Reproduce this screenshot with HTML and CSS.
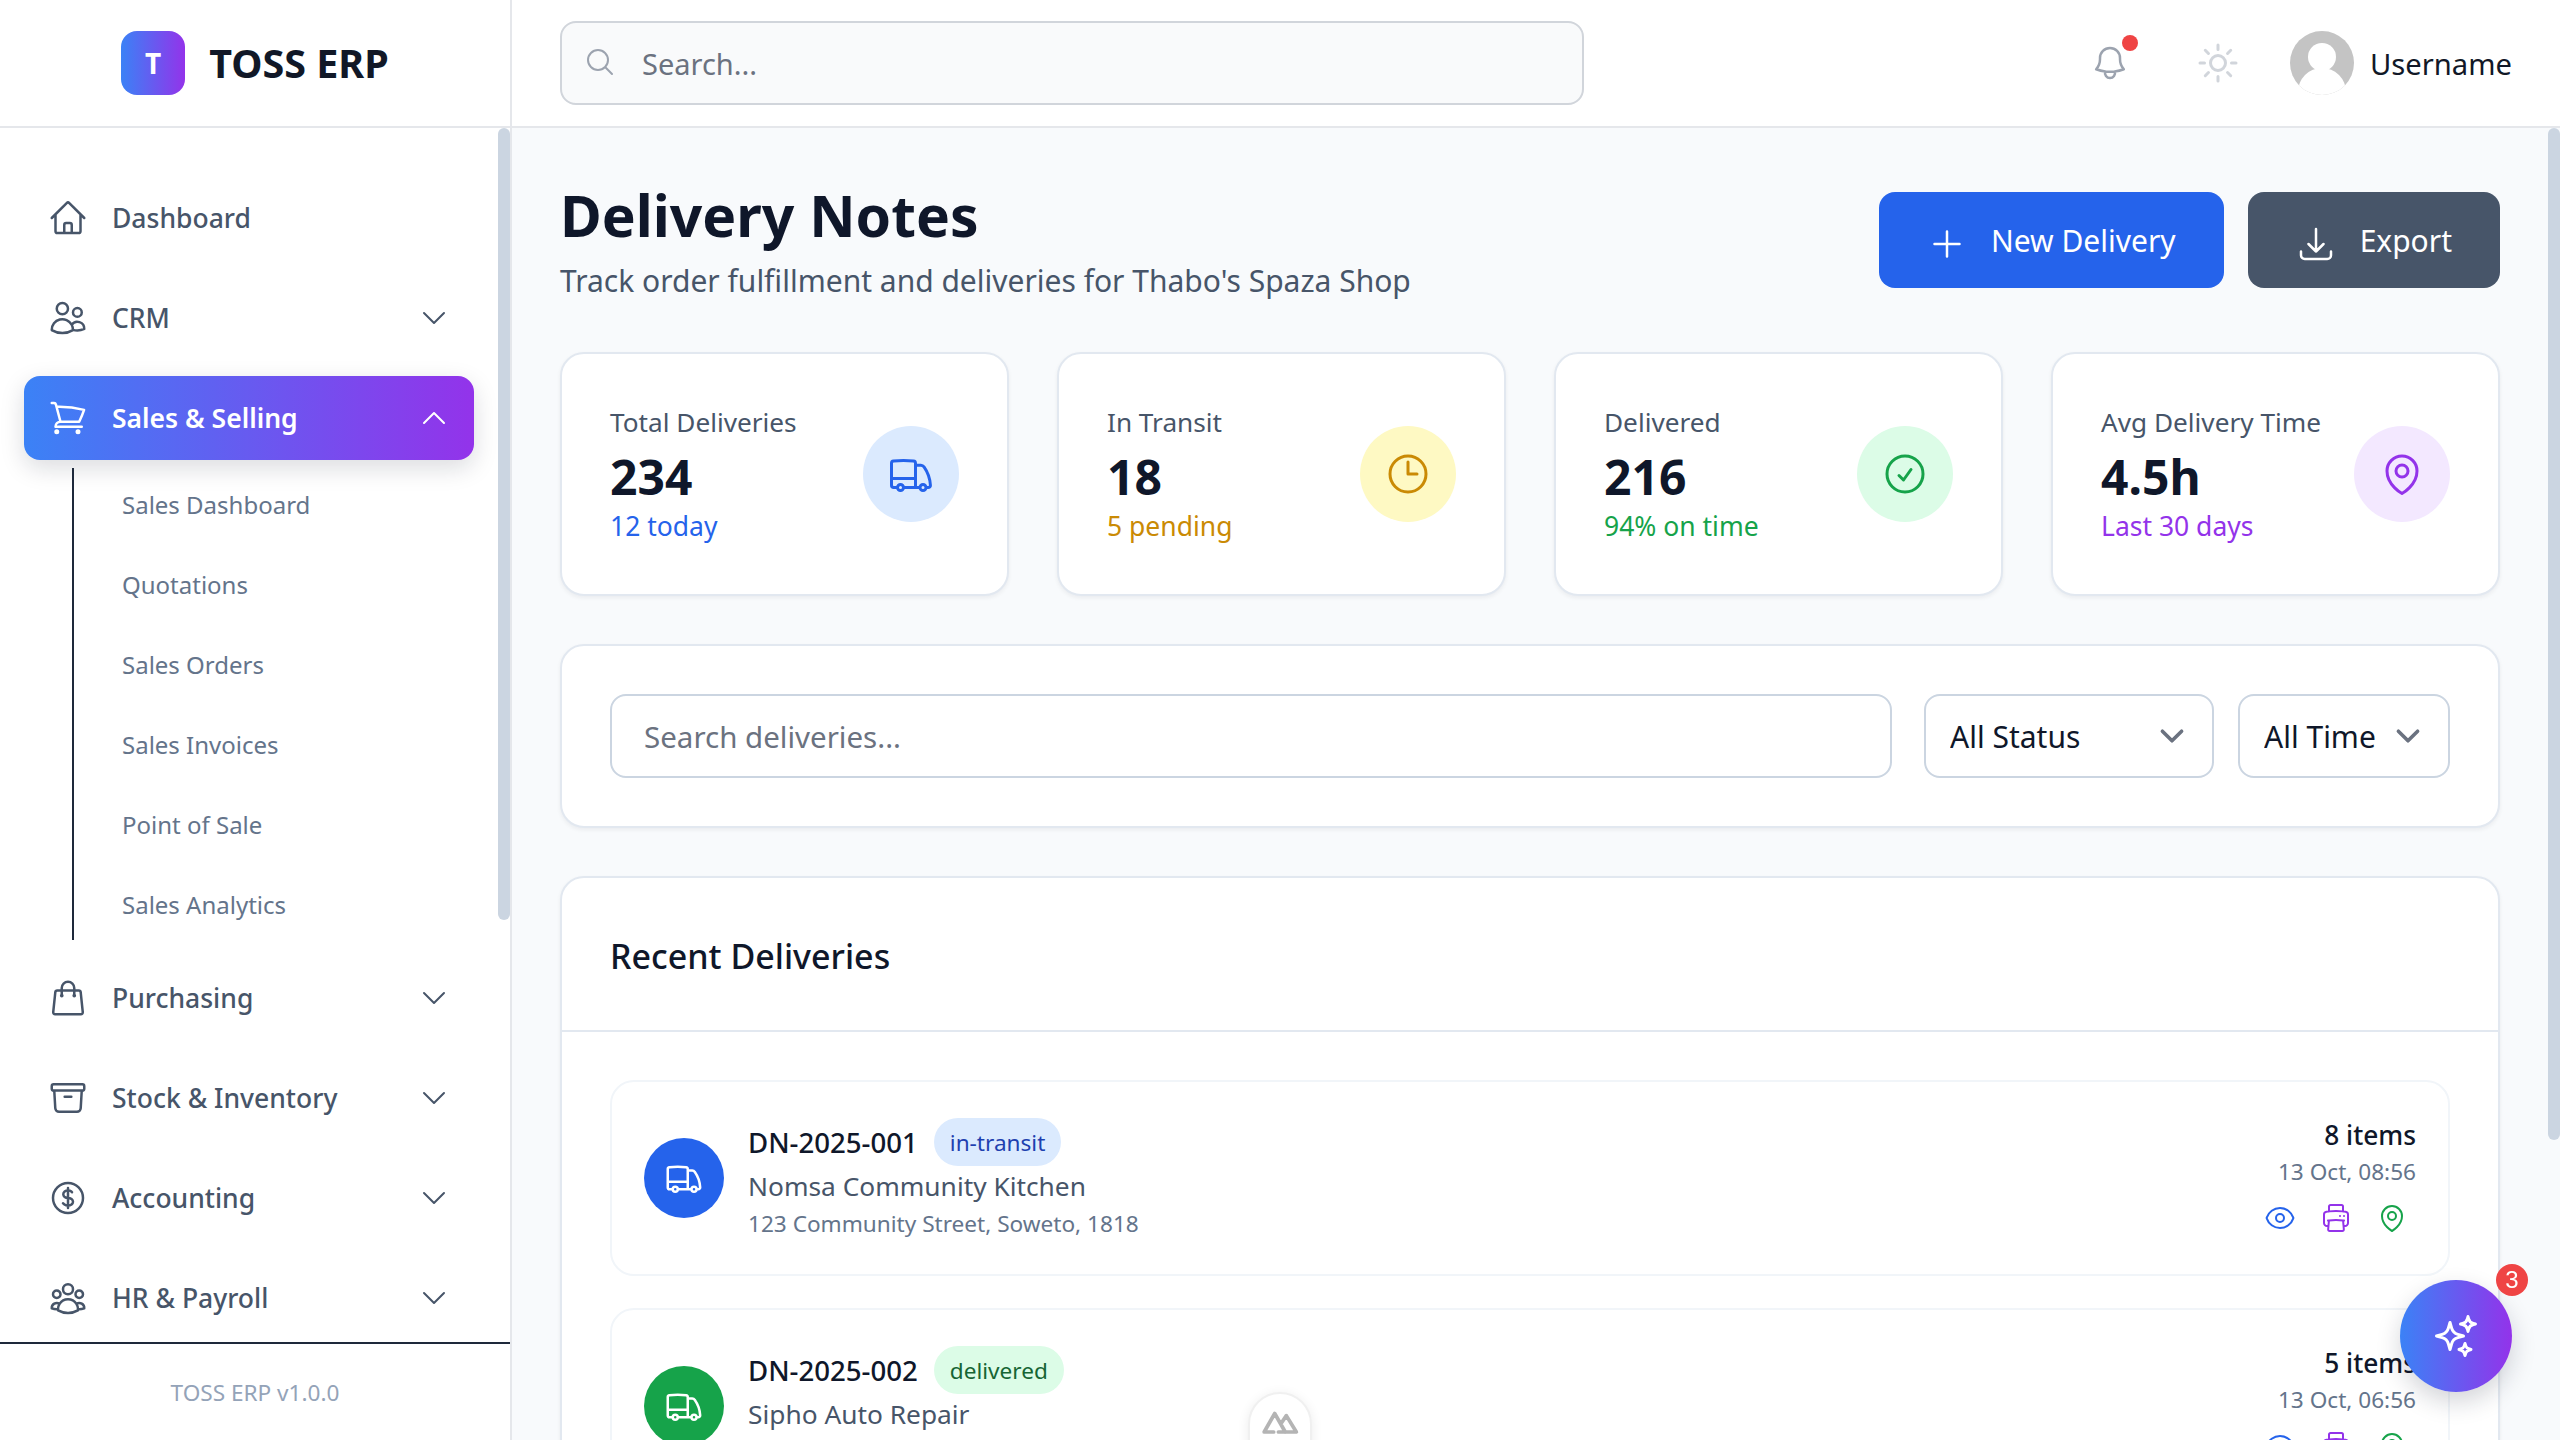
FILE: index.html
```html
<!DOCTYPE html>
<html lang="en">
<head>
  <meta charset="UTF-8">
  <meta name="viewport" content="width=device-width, initial-scale=1.0">
  <title>Delivery Notes - TOSS ERP</title>
  <link rel="stylesheet" href="styles.css">
</head>
<body>
  <aside class="sidebar">
    <div class="brand">
      <div class="brand-logo">T</div>
      <span class="brand-name">TOSS ERP</span>
    </div>
    <div class="scroll-area">
      <nav class="nav">
        <a class="nav-item">
          <svg class="nav-icon" viewBox="0 0 24 24"><path d="m2.25 12 8.954-8.955c.44-.439 1.152-.439 1.591 0L21.75 12M4.5 9.75v10.125c0 .621.504 1.125 1.125 1.125H9.75v-4.875c0-.621.504-1.125 1.125-1.125h2.25c.621 0 1.125.504 1.125 1.125V21h4.125c.621 0 1.125-.504 1.125-1.125V9.75M8.25 21h8.25"/></svg>
          <span class="nav-label">Dashboard</span>
        </a>
        <a class="nav-item">
          <svg class="nav-icon" viewBox="0 0 24 24"><path d="M15 19.128a9.38 9.38 0 0 0 2.625.372 9.337 9.337 0 0 0 4.121-.952 4.125 4.125 0 0 0-7.533-2.493M15 19.128v-.003c0-1.113-.285-2.16-.786-3.07M15 19.128v.106A12.318 12.318 0 0 1 8.624 21c-2.331 0-4.512-.645-6.374-1.766l-.001-.109a6.375 6.375 0 0 1 11.964-3.07M12 6.375a3.375 3.375 0 1 1-6.75 0 3.375 3.375 0 0 1 6.75 0Zm8.25 2.25a2.625 2.625 0 1 1-5.25 0 2.625 2.625 0 0 1 5.25 0Z"/></svg>
          <span class="nav-label">CRM</span>
          <svg class="nav-chevron" viewBox="0 0 24 24"><path d="m19.5 8.25-7.5 7.5-7.5-7.5"/></svg>
        </a>
        <a class="nav-item active">
          <svg class="nav-icon" viewBox="0 0 24 24"><path d="M2.25 3h1.386c.51 0 .955.343 1.087.835l.383 1.437M7.5 14.25a3 3 0 0 0-3 3h15.75m-12.75-3h11.218c1.121-2.3 2.1-4.684 2.924-7.138a60.114 60.114 0 0 0-16.536-1.84M7.5 14.25 5.106 5.272M6 20.25a.75.75 0 1 1-1.5 0 .75.75 0 0 1 1.5 0Zm12.75 0a.75.75 0 1 1-1.5 0 .75.75 0 0 1 1.5 0Z"/></svg>
          <span class="nav-label">Sales &amp; Selling</span>
          <svg class="nav-chevron" viewBox="0 0 24 24"><path d="m4.5 15.75 7.5-7.5 7.5 7.5"/></svg>
        </a>
        <div class="subnav">
          <a class="subnav-item">Sales Dashboard</a>
          <a class="subnav-item">Quotations</a>
          <a class="subnav-item">Sales Orders</a>
          <a class="subnav-item">Sales Invoices</a>
          <a class="subnav-item">Point of Sale</a>
          <a class="subnav-item">Sales Analytics</a>
        </div>
        <a class="nav-item">
          <svg class="nav-icon" viewBox="0 0 24 24"><path d="M15.75 10.5V6a3.75 3.75 0 1 0-7.5 0v4.5m11.356-1.993 1.263 12c.07.665-.45 1.243-1.119 1.243H4.25a1.125 1.125 0 0 1-1.12-1.243l1.264-12A1.125 1.125 0 0 1 5.513 7.5h12.974c.576 0 1.059.435 1.119 1.007ZM8.625 10.5a.375.375 0 1 1-.75 0 .375.375 0 0 1 .75 0Zm7.5 0a.375.375 0 1 1-.75 0 .375.375 0 0 1 .75 0Z"/></svg>
          <span class="nav-label">Purchasing</span>
          <svg class="nav-chevron" viewBox="0 0 24 24"><path d="m19.5 8.25-7.5 7.5-7.5-7.5"/></svg>
        </a>
        <a class="nav-item">
          <svg class="nav-icon" viewBox="0 0 24 24"><path d="m20.25 7.5-.625 10.632a2.25 2.25 0 0 1-2.247 2.118H6.622a2.25 2.25 0 0 1-2.247-2.118L3.75 7.5M10 11.25h4M3.375 7.5h17.25c.621 0 1.125-.504 1.125-1.125v-1.5c0-.621-.504-1.125-1.125-1.125H3.375c-.621 0-1.125.504-1.125 1.125v1.5c0 .621.504 1.125 1.125 1.125Z"/></svg>
          <span class="nav-label">Stock &amp; Inventory</span>
          <svg class="nav-chevron" viewBox="0 0 24 24"><path d="m19.5 8.25-7.5 7.5-7.5-7.5"/></svg>
        </a>
        <a class="nav-item">
          <svg class="nav-icon" viewBox="0 0 24 24"><path d="M12 6v12m-3-2.818.879.659c1.171.879 3.07.879 4.242 0 1.172-.879 1.172-2.303 0-3.182C13.536 12.219 12.768 12 12 12c-.725 0-1.45-.22-2.003-.659-1.106-.879-1.106-2.303 0-3.182s2.9-.879 4.006 0l.415.33M21 12a9 9 0 1 1-18 0 9 9 0 0 1 18 0Z"/></svg>
          <span class="nav-label">Accounting</span>
          <svg class="nav-chevron" viewBox="0 0 24 24"><path d="m19.5 8.25-7.5 7.5-7.5-7.5"/></svg>
        </a>
        <a class="nav-item">
          <svg class="nav-icon" viewBox="0 0 24 24"><path d="M18 18.72a9.094 9.094 0 0 0 3.741-.479 3 3 0 0 0-4.682-2.72m.94 3.198.001.031c0 .225-.012.447-.037.666A11.944 11.944 0 0 1 12 21c-2.17 0-4.207-.576-5.963-1.584A6.062 6.062 0 0 1 6 18.719m12 0a5.971 5.971 0 0 0-.941-3.197m0 0A5.995 5.995 0 0 0 12 12.75a5.995 5.995 0 0 0-5.058 2.772m0 0a3 3 0 0 0-4.681 2.72 8.986 8.986 0 0 0 3.74.477m.94-3.197a5.971 5.971 0 0 0-.94 3.197M15 6.75a3 3 0 1 1-6 0 3 3 0 0 1 6 0Zm6 3a2.25 2.25 0 1 1-4.5 0 2.25 2.25 0 0 1 4.5 0Zm-13.5 0a2.25 2.25 0 1 1-4.5 0 2.25 2.25 0 0 1 4.5 0Z"/></svg>
          <span class="nav-label">HR &amp; Payroll</span>
          <svg class="nav-chevron" viewBox="0 0 24 24"><path d="m19.5 8.25-7.5 7.5-7.5-7.5"/></svg>
        </a>
      </nav>
      <div class="scroll-track"><div class="scroll-thumb nav-thumb"></div></div>
    </div>
    <div class="sidebar-footer">TOSS ERP v1.0.0</div>
  </aside>

  <div class="content">
    <header class="topbar">
      <label class="topbar-search">
        <svg class="topbar-search-icon" viewBox="0 0 24 24"><path d="m21 21-5.197-5.197m0 0A7.5 7.5 0 1 0 5.196 5.196a7.5 7.5 0 0 0 10.607 10.607Z"/></svg>
        <input type="text" placeholder="Search...">
      </label>
      <div class="topbar-actions">
        <div class="bell">
          <svg viewBox="0 0 24 24"><path d="M14.857 17.082a23.848 23.848 0 0 0 5.454-1.31A8.967 8.967 0 0 1 18 9.75V9A6 6 0 0 0 6 9v.75a8.967 8.967 0 0 1-2.312 6.022c1.733.64 3.56 1.085 5.455 1.31m5.714 0a24.255 24.255 0 0 1-5.714 0m5.714 0a3 3 0 1 1-5.714 0"/></svg>
          <span class="bell-dot"></span>
        </div>
        <svg class="sun" viewBox="0 0 24 24"><path d="M12 3v2.25m6.364.386-1.591 1.591M21 12h-2.25m-.386 6.364-1.591-1.591M12 18.75V21m-4.773-4.227-1.591 1.591M5.25 12H3m4.227-4.773L5.636 5.636M15.75 12a3.75 3.75 0 1 1-7.5 0 3.75 3.75 0 0 1 7.5 0Z"/></svg>
        <div class="user">
          <svg class="avatar" viewBox="0 0 64 64">
            <clipPath id="avatarClip"><circle cx="32" cy="32" r="32"/></clipPath>
            <g clip-path="url(#avatarClip)">
              <rect width="64" height="64" fill="#c4c4c4"/>
              <circle cx="32" cy="26" r="14" fill="#fff"/>
              <ellipse cx="32" cy="61" rx="24" ry="24" fill="#fff"/>
            </g>
          </svg>
          <span class="username">Username</span>
        </div>
      </div>
    </header>

    <div class="scroll-area">
      <main class="page">
        <div class="page-head">
          <div>
            <h1>Delivery Notes</h1>
            <p class="page-sub">Track order fulfillment and deliveries for Thabo's Spaza Shop</p>
          </div>
          <div class="page-actions">
            <button class="btn btn-blue">
              <svg viewBox="0 0 24 24"><path d="M12 4.5v15m7.5-7.5h-15"/></svg>
              New Delivery
            </button>
            <button class="btn btn-slate">
              <svg viewBox="0 0 24 24"><path d="M3 16.5v2.25A2.25 2.25 0 0 0 5.25 21h13.5A2.25 2.25 0 0 0 21 18.75V16.5M16.5 12 12 16.5m0 0L7.5 12m4.5 4.5V3"/></svg>
              Export
            </button>
          </div>
        </div>

        <section class="stats">
          <div class="stat-card">
            <div>
              <p class="stat-label">Total Deliveries</p>
              <p class="stat-value">234</p>
              <p class="stat-note blue">12 today</p>
            </div>
            <div class="stat-icon bg-blue blue">
              <svg viewBox="0 0 24 24"><path d="M8.25 18.75a1.5 1.5 0 0 1-3 0m3 0a1.5 1.5 0 0 0-3 0m3 0h6m-9 0H3.375a1.125 1.125 0 0 1-1.125-1.125V14.25m17.25 4.5a1.5 1.5 0 0 1-3 0m3 0a1.5 1.5 0 0 0-3 0m3 0h1.125c.621 0 1.129-.504 1.09-1.124a17.902 17.902 0 0 0-3.213-9.193 2.056 2.056 0 0 0-1.58-.86H14.25M16.5 18.75h-2.25m0-11.177v-.958c0-.568-.422-1.048-.987-1.106a48.554 48.554 0 0 0-10.026 0 1.106 1.106 0 0 0-.987 1.106v7.635m12-6.677v6.677m0 4.5v-4.5m0 0h-12"/></svg>
            </div>
          </div>
          <div class="stat-card">
            <div>
              <p class="stat-label">In Transit</p>
              <p class="stat-value">18</p>
              <p class="stat-note amber">5 pending</p>
            </div>
            <div class="stat-icon bg-amber amber">
              <svg viewBox="0 0 24 24"><path d="M12 6v6h4.5m4.5 0a9 9 0 1 1-18 0 9 9 0 0 1 18 0Z"/></svg>
            </div>
          </div>
          <div class="stat-card">
            <div>
              <p class="stat-label">Delivered</p>
              <p class="stat-value">216</p>
              <p class="stat-note green">94% on time</p>
            </div>
            <div class="stat-icon bg-green green">
              <svg viewBox="0 0 24 24"><path d="M9 12.75 11.25 15 15 9.75M21 12a9 9 0 1 1-18 0 9 9 0 0 1 18 0Z"/></svg>
            </div>
          </div>
          <div class="stat-card">
            <div>
              <p class="stat-label">Avg Delivery Time</p>
              <p class="stat-value">4.5h</p>
              <p class="stat-note purple">Last 30 days</p>
            </div>
            <div class="stat-icon bg-purple purple">
              <svg viewBox="0 0 24 24"><path d="M15 10.5a3 3 0 1 1-6 0 3 3 0 0 1 6 0Z"/><path d="M19.5 10.5c0 7.142-7.5 11.25-7.5 11.25S4.5 17.642 4.5 10.5a7.5 7.5 0 1 1 15 0Z"/></svg>
            </div>
          </div>
        </section>

        <section class="filters">
          <input class="filter-search" type="text" placeholder="Search deliveries...">
          <select class="filter-select status"><option>All Status</option></select>
          <select class="filter-select time"><option>All Time</option></select>
        </section>

        <section class="recent">
          <h2 class="recent-title">Recent Deliveries</h2>
          <div class="recent-list">
            <article class="delivery">
              <div class="delivery-icon solid-blue">
                <svg viewBox="0 0 24 24"><path d="M8.25 18.75a1.5 1.5 0 0 1-3 0m3 0a1.5 1.5 0 0 0-3 0m3 0h6m-9 0H3.375a1.125 1.125 0 0 1-1.125-1.125V14.25m17.25 4.5a1.5 1.5 0 0 1-3 0m3 0a1.5 1.5 0 0 0-3 0m3 0h1.125c.621 0 1.129-.504 1.09-1.124a17.902 17.902 0 0 0-3.213-9.193 2.056 2.056 0 0 0-1.58-.86H14.25M16.5 18.75h-2.25m0-11.177v-.958c0-.568-.422-1.048-.987-1.106a48.554 48.554 0 0 0-10.026 0 1.106 1.106 0 0 0-.987 1.106v7.635m12-6.677v6.677m0 4.5v-4.5m0 0h-12"/></svg>
              </div>
              <div class="delivery-main">
                <div class="delivery-top">
                  <span class="delivery-no">DN-2025-001</span>
                  <span class="pill pill-blue">in-transit</span>
                </div>
                <p class="delivery-name">Nomsa Community Kitchen</p>
                <p class="delivery-addr">123 Community Street, Soweto, 1818</p>
              </div>
              <div class="delivery-side">
                <p class="delivery-items">8 items</p>
                <p class="delivery-date">13 Oct, 08:56</p>
                <div class="delivery-actions">
                  <svg class="blue" viewBox="0 0 24 24"><path d="M2.036 12.322a1.012 1.012 0 0 1 0-.639C3.423 7.51 7.36 4.5 12 4.5c4.638 0 8.573 3.007 9.963 7.178.07.207.07.431 0 .639C20.577 16.49 16.64 19.5 12 19.5c-4.638 0-8.573-3.007-9.963-7.178Z"/><path d="M15 12a3 3 0 1 1-6 0 3 3 0 0 1 6 0Z"/></svg>
                  <svg class="purple" viewBox="0 0 24 24"><path d="M6.72 13.829c-.24.03-.48.062-.72.096m.72-.096a42.415 42.415 0 0 1 10.56 0m-10.56 0L6.34 18m10.94-4.171c.24.03.48.062.72.096m-.72-.096L17.66 18m0 0 .229 2.523a1.125 1.125 0 0 1-1.12 1.227H7.231c-.662 0-1.18-.568-1.12-1.227L6.34 18m11.318 0h1.091A2.25 2.25 0 0 0 21 15.75V9.456c0-1.081-.768-2.015-1.837-2.175a48.055 48.055 0 0 0-1.913-.247M6.34 18H5.25A2.25 2.25 0 0 1 3 15.75V9.456c0-1.081.768-2.015 1.837-2.175a48.041 48.041 0 0 1 1.913-.247m10.5 0a48.536 48.536 0 0 0-10.5 0m10.5 0V3.375c0-.621-.504-1.125-1.125-1.125h-8.25c-.621 0-1.125.504-1.125 1.125v3.659M18 10.5h.008v.008H18V10.5Zm-3 0h.008v.008H15V10.5Z"/></svg>
                  <svg class="green" viewBox="0 0 24 24"><path d="M15 10.5a3 3 0 1 1-6 0 3 3 0 0 1 6 0Z"/><path d="M19.5 10.5c0 7.142-7.5 11.25-7.5 11.25S4.5 17.642 4.5 10.5a7.5 7.5 0 1 1 15 0Z"/></svg>
                </div>
              </div>
            </article>
            <article class="delivery">
              <div class="delivery-icon solid-green">
                <svg viewBox="0 0 24 24"><path d="M8.25 18.75a1.5 1.5 0 0 1-3 0m3 0a1.5 1.5 0 0 0-3 0m3 0h6m-9 0H3.375a1.125 1.125 0 0 1-1.125-1.125V14.25m17.25 4.5a1.5 1.5 0 0 1-3 0m3 0a1.5 1.5 0 0 0-3 0m3 0h1.125c.621 0 1.129-.504 1.09-1.124a17.902 17.902 0 0 0-3.213-9.193 2.056 2.056 0 0 0-1.58-.86H14.25M16.5 18.75h-2.25m0-11.177v-.958c0-.568-.422-1.048-.987-1.106a48.554 48.554 0 0 0-10.026 0 1.106 1.106 0 0 0-.987 1.106v7.635m12-6.677v6.677m0 4.5v-4.5m0 0h-12"/></svg>
              </div>
              <div class="delivery-main">
                <div class="delivery-top">
                  <span class="delivery-no">DN-2025-002</span>
                  <span class="pill pill-green">delivered</span>
                </div>
                <p class="delivery-name">Sipho Auto Repair</p>
              </div>
              <div class="delivery-side">
                <p class="delivery-items">5 items</p>
                <p class="delivery-date">13 Oct, 06:56</p>
                <div class="delivery-actions">
                  <svg class="blue" viewBox="0 0 24 24"><path d="M2.036 12.322a1.012 1.012 0 0 1 0-.639C3.423 7.51 7.36 4.5 12 4.5c4.638 0 8.573 3.007 9.963 7.178.07.207.07.431 0 .639C20.577 16.49 16.64 19.5 12 19.5c-4.638 0-8.573-3.007-9.963-7.178Z"/><path d="M15 12a3 3 0 1 1-6 0 3 3 0 0 1 6 0Z"/></svg>
                  <svg class="purple" viewBox="0 0 24 24"><path d="M6.72 13.829c-.24.03-.48.062-.72.096m.72-.096a42.415 42.415 0 0 1 10.56 0m-10.56 0L6.34 18m10.94-4.171c.24.03.48.062.72.096m-.72-.096L17.66 18m0 0 .229 2.523a1.125 1.125 0 0 1-1.12 1.227H7.231c-.662 0-1.18-.568-1.12-1.227L6.34 18m11.318 0h1.091A2.25 2.25 0 0 0 21 15.75V9.456c0-1.081-.768-2.015-1.837-2.175a48.055 48.055 0 0 0-1.913-.247M6.34 18H5.25A2.25 2.25 0 0 1 3 15.75V9.456c0-1.081.768-2.015 1.837-2.175a48.041 48.041 0 0 1 1.913-.247m10.5 0a48.536 48.536 0 0 0-10.5 0m10.5 0V3.375c0-.621-.504-1.125-1.125-1.125h-8.25c-.621 0-1.125.504-1.125 1.125v3.659M18 10.5h.008v.008H18V10.5Zm-3 0h.008v.008H15V10.5Z"/></svg>
                  <svg class="green" viewBox="0 0 24 24"><path d="M15 10.5a3 3 0 1 1-6 0 3 3 0 0 1 6 0Z"/><path d="M19.5 10.5c0 7.142-7.5 11.25-7.5 11.25S4.5 17.642 4.5 10.5a7.5 7.5 0 1 1 15 0Z"/></svg>
                </div>
              </div>
            </article>
          </div>
        </section>
      </main>
      <div class="scroll-track"><div class="scroll-thumb page-thumb"></div></div>
    </div>
  </div>

  <div class="dev-button">
    <svg viewBox="0 0 36 24"><path d="M12 20.5H3L13 3l10 17.5M19 12.5 24 5l9.5 15.5H16.5"/></svg>
  </div>

  <button class="fab">
    <svg viewBox="0 0 24 24"><path d="M9.813 15.904 9 18.75l-.813-2.846a4.5 4.5 0 0 0-3.09-3.09L2.25 12l2.846-.813a4.5 4.5 0 0 0 3.09-3.09L9 5.25l.813 2.846a4.5 4.5 0 0 0 3.09 3.09L15.75 12l-2.846.813a4.5 4.5 0 0 0-3.09 3.09ZM18.259 8.715 18 9.75l-.259-1.035a3.375 3.375 0 0 0-2.455-2.456L14.25 6l1.036-.259a3.375 3.375 0 0 0 2.455-2.456L18 2.25l.259 1.035a3.375 3.375 0 0 0 2.456 2.456L21.75 6l-1.035.259a3.375 3.375 0 0 0-2.456 2.456ZM16.894 20.567 16.5 21.75l-.394-1.183a2.25 2.25 0 0 0-1.423-1.423L13.5 18.75l1.183-.394a2.25 2.25 0 0 0 1.423-1.423l.394-1.183.394 1.183a2.25 2.25 0 0 0 1.423 1.423l1.183.394-1.183.394a2.25 2.25 0 0 0-1.423 1.423Z"/></svg>
    <span class="fab-badge">3</span>
  </button>
</body>
</html>
```

FILE: styles.css
```css
* { box-sizing: border-box; }
html, body { height: 100%; }
body { margin: 0; display: flex; height: 100vh; overflow: hidden; font-family: "Noto Sans", "Open Sans", sans-serif; color: #0f172a; background: #f8fafc; }
p, h1, h2 { margin: 0; }
svg { fill: none; stroke: currentColor; stroke-width: 1.5; stroke-linecap: round; stroke-linejoin: round; flex-shrink: 0; }

.blue { color: #2563eb; }
.amber { color: #ca8a04; }
.green { color: #16a34a; }
.purple { color: #9333ea; }
.bg-blue { background: #dbeafe; }
.bg-amber { background: #fef9c3; }
.bg-green { background: #dcfce7; }
.bg-purple { background: #f3e8ff; }

/* scroll columns */
.scroll-area { flex: 1; min-height: 0; display: flex; overflow: hidden; }
.scroll-track { width: 12px; flex-shrink: 0; }
.scroll-thumb { background: #cbd5e1; border-radius: 6px; }
.nav-thumb { height: 792px; }
.page-thumb { height: 1012px; }

/* sidebar */
.sidebar { width: 512px; flex-shrink: 0; display: flex; flex-direction: column; background: #fff; border-right: 2px solid #e5e7eb; }
.brand { height: 128px; flex-shrink: 0; display: flex; align-items: center; justify-content: center; gap: 24px; border-bottom: 2px solid #e5e7eb; }
.brand-logo { width: 64px; height: 64px; border-radius: 16px; display: flex; align-items: center; justify-content: center; background: linear-gradient(to right, #3b82f6, #9333ea); color: #fff; font-size: 28px; font-weight: 700; }
.brand-name { font-size: 39.5px; font-weight: 700; color: #111827; }

.nav { flex: 1; min-width: 0; padding: 48px 24px; display: flex; flex-direction: column; gap: 16px; }
.nav-item { flex-shrink: 0; height: 84px; display: flex; align-items: center; gap: 24px; padding: 0 24px; border-radius: 16px; color: #475569; font-size: 26.5px; font-weight: 500; }
.nav-item.active { background: linear-gradient(to right, #3b82f6, #9333ea); color: #fff; font-weight: 600; box-shadow: 0 8px 24px rgba(15, 23, 42, 0.15); margin-bottom: -8px; }
.nav-icon { width: 40px; height: 40px; }
.nav-label { flex: 1; }
.nav-chevron { width: 32px; height: 32px; }
.subnav { flex-shrink: 0; margin-left: 48px; padding-left: 48px; border-left: 2px solid #1e293b; display: flex; flex-direction: column; gap: 8px; }
.subnav-item { height: 72px; display: flex; align-items: center; font-size: 24px; color: #64748b; }
.sidebar-footer { height: 98px; flex-shrink: 0; border-top: 2px solid #1e293b; display: flex; align-items: center; justify-content: center; font-size: 22.6px; color: #94a3b8; }

/* top bar */
.content { flex: 1; min-width: 0; display: flex; flex-direction: column; }
.topbar { height: 128px; flex-shrink: 0; display: flex; align-items: center; justify-content: space-between; padding: 0 48px; background: #fff; border-bottom: 2px solid #e5e7eb; }
.topbar-search { width: 1024px; height: 84px; display: flex; align-items: center; gap: 26px; padding: 0 22px; border: 2px solid #d1d5db; border-radius: 16px; background: #f9fafb; }
.topbar-search-icon { width: 32px; height: 32px; color: #9ca3af; margin-bottom: 2px; }
.topbar-search input { flex: 1; border: none; outline: none; background: transparent; font: inherit; font-size: 29px; color: #111827; padding: 1px 0 0; }
.topbar-search input::placeholder { color: #6b7280; }
.topbar-actions { display: flex; align-items: center; gap: 48px; }
.bell { position: relative; width: 40px; height: 40px; margin-right: 16px; color: #9ca3af; }
.bell svg { width: 40px; height: 40px; display: block; }
.bell-dot { position: absolute; top: -8px; right: -8px; width: 16px; height: 16px; border-radius: 50%; background: #ef4444; }
.sun { width: 48px; height: 48px; color: #d1d5db; }
.user { display: flex; align-items: center; gap: 16px; }
.avatar { width: 64px; height: 64px; stroke: none; }
.username { font-size: 29.2px; color: #111827; padding-top: 1px; }

/* page */
.page { flex: 1; min-width: 0; padding: 48px; }
.page-head { display: flex; align-items: center; justify-content: space-between; }
h1 { font-size: 57px; line-height: 78px; margin-bottom: 3px; font-weight: 700; color: #0f172a; }
.page-sub { font-size: 30px; line-height: 48px; color: #475569; margin-bottom: -1px; }
.page-actions { display: flex; gap: 24px; }
.btn { height: 96px; display: flex; align-items: center; gap: 24px; padding: 0 48px; border: none; border-radius: 16px; color: #fff; font: inherit; font-size: 30px; }
.btn svg { width: 40px; height: 40px; margin-top: 8px; }
.btn-blue { background: #2563eb; }
.btn-slate { background: #475569; }

.stats { display: grid; grid-template-columns: repeat(4, 1fr); gap: 48px; margin-top: 48px; }
.stat-card { height: 244px; display: flex; align-items: center; justify-content: space-between; padding: 0 48px; background: #fff; border: 2px solid #e2e8f0; border-radius: 24px; box-shadow: 0 2px 4px rgba(15, 23, 42, 0.06); }
.stat-label { font-size: 26.2px; line-height: 40px; color: #475569; }
.stat-value { font-size: 48px; line-height: 56px; font-weight: 700; color: #0f172a; margin-top: 7px; }
.stat-note { font-size: 26.5px; line-height: 40px; margin-top: 1px; }
.stat-icon { width: 96px; height: 96px; border-radius: 50%; display: flex; align-items: center; justify-content: center; }
.stat-icon svg { width: 48px; height: 48px; }

.filters { display: flex; gap: 24px; margin-top: 48px; padding: 48px; background: #fff; border: 2px solid #e2e8f0; border-radius: 24px; box-shadow: 0 2px 4px rgba(15, 23, 42, 0.06); }
.filter-search { flex: 1; min-width: 0; height: 84px; margin-right: 8px; padding: 0 32px; border: 2px solid #cbd5e1; border-radius: 16px; font: inherit; font-size: 29.5px; outline: none; }
.filter-search::placeholder { color: #6b7280; }
.filter-select { height: 84px; padding: 0 72px 0 24px; border: 2px solid #cbd5e1; border-radius: 16px; font: inherit; font-size: 30px; color: #0f172a; appearance: none; background: #fff url("data:image/svg+xml,%3csvg xmlns='http://www.w3.org/2000/svg' fill='none' viewBox='0 0 20 20'%3e%3cpath stroke='%236b7280' stroke-linecap='round' stroke-linejoin='round' stroke-width='1.5' d='m6 8 4 4 4-4'/%3e%3c/svg%3e") no-repeat right 16px center / 48px 48px; }
.filter-select.status { width: 290px; }
.filter-select.time { width: 212px; }

.recent { margin-top: 48px; background: #fff; border: 2px solid #e2e8f0; border-radius: 24px; box-shadow: 0 2px 4px rgba(15, 23, 42, 0.06); }
.recent-title { padding: 50px 48px 46px; font-size: 34px; line-height: 56px; font-weight: 500; color: #0f172a; border-bottom: 2px solid #e2e8f0; }
.recent-list { padding: 48px; display: flex; flex-direction: column; gap: 32px; }
.delivery { height: 196px; display: flex; align-items: flex-start; gap: 24px; padding: 0 32px; border: 2px solid #f1f5f9; border-radius: 24px; }
.delivery-icon { width: 80px; height: 80px; margin-top: 56px; border-radius: 50%; display: flex; align-items: center; justify-content: center; color: #fff; }
.delivery-icon svg { width: 40px; height: 40px; }
.solid-blue { background: #2563eb; }
.solid-green { background: #16a34a; }
.delivery-main { flex: 1; min-width: 0; padding-top: 36px; }
.delivery-top { display: flex; align-items: center; gap: 16px; }
.delivery-no { font-size: 27.6px; font-weight: 500; color: #0f172a; }
.pill { height: 48px; display: flex; align-items: center; padding: 0 16px; border-radius: 24px; font-size: 22.6px; }
.pill-blue { background: #dbeafe; color: #1e40af; }
.pill-green { background: #dcfce7; color: #166534; }
.delivery-name { font-size: 26.3px; line-height: 40px; color: #475569; }
.delivery-addr { font-size: 22.6px; line-height: 32px; color: #64748b; margin-top: 2px; }
.delivery-side { display: flex; flex-direction: column; align-items: flex-end; padding-top: 33px; }
.delivery-items { font-size: 26.3px; line-height: 40px; font-weight: 500; color: #0f172a; }
.delivery-date { font-size: 22.6px; line-height: 32px; color: #64748b; margin-top: 1px; }
.delivery-actions { display: flex; gap: 24px; margin-top: 14px; margin-right: 8px; }
.delivery-actions svg { width: 32px; height: 32px; }

/* floating bits */
.dev-button { position: fixed; left: 1248px; top: 1392px; width: 64px; height: 80px; display: flex; justify-content: center; padding-top: 16px; background: #fff; border: 2px solid #f0f0f0; border-radius: 32px; box-shadow: 0 2px 12px rgba(0, 0, 0, 0.08); color: #b4b4b4; }
.dev-button svg { width: 38px; height: 26px; stroke-width: 3.5; }
.fab { position: fixed; left: 2400px; top: 1280px; width: 112px; height: 112px; display: flex; align-items: center; justify-content: center; border: none; border-radius: 50%; color: #fff; background: linear-gradient(to right, #3b82f6, #9333ea); box-shadow: 0 10px 24px rgba(15, 23, 42, 0.18); padding: 0; }
.fab svg { width: 48px; height: 48px; }
.fab-badge { position: absolute; top: -16px; right: -16px; width: 32px; height: 32px; border-radius: 50%; background: #ef4444; color: #fff; font-size: 24px; line-height: 32px; text-align: center; }
```
